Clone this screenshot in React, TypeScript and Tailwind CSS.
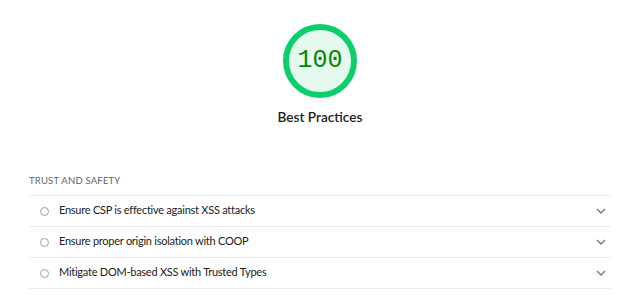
import React from "react";

const audits = [
  "Ensure CSP is effective against XSS attacks",
  "Ensure proper origin isolation with COOP",
  "Mitigate DOM-based XSS with Trusted Types",
];

const Chevron = () => (
  <svg width="10" height="6" viewBox="0 0 10 6" fill="none">
    <path d="M1 1l4 4 4-4" stroke="#757575" strokeWidth="1.3" />
  </svg>
);

const App = () => {
  return (
    <div className="w-[640px] h-[303px] bg-white overflow-hidden font-['Lato',sans-serif] text-[#212121]">
      <div className="flex flex-col items-center pt-[24px]">
        <div className="w-[74px] h-[74px] rounded-full border-[6px] border-[#0cce6b] bg-[#e6f9ef] flex items-center justify-center">
          <span className="font-['Liberation_Mono',monospace] text-[25px] leading-none text-[#008800] -mt-[1px]">
            100
          </span>
        </div>
        <div className="mt-[9px] text-[13.6px] leading-[20px] font-semibold">Best Practices</div>
      </div>

      <div className="mx-[29px] mt-[47px]">
        <div className="text-[9.5px] leading-[14px] tracking-[0.2px] text-[#5f6368] uppercase pb-[7px]">
          Trust and Safety
        </div>
        {audits.map((a) => (
          <div
            key={a}
            className="h-[31px] border-t border-[#ececec] flex items-center text-[11px] tracking-[-0.25px]"
          >
            <span className="ml-[11px] w-[9px] h-[9px] rounded-full border border-[#a0a0a0]" />
            <span className="ml-[10px] flex-1 -mt-[1px]">{a}</span>
            <span className="mr-[5px] flex items-center">
              <Chevron />
            </span>
          </div>
        ))}
        <div className="border-t border-[#ececec]" />
      </div>
    </div>
  );
};

export default App;
